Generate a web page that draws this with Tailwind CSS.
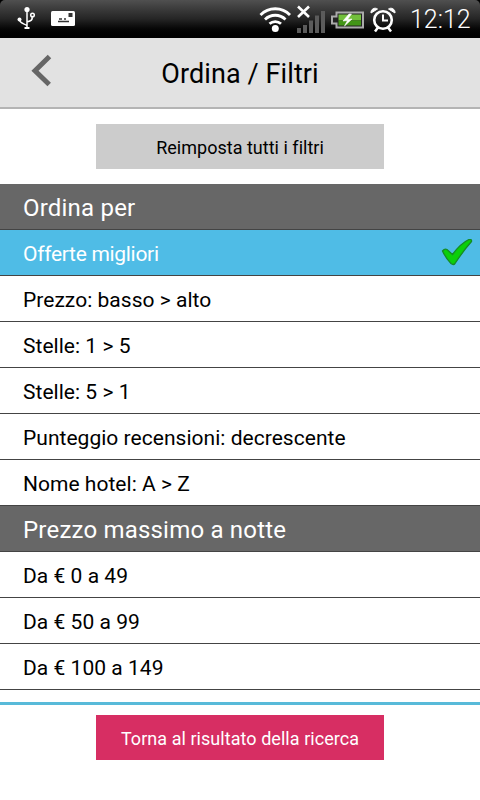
<!DOCTYPE html>
<html lang="it">
<head>
<meta charset="utf-8">
<title>Ordina / Filtri</title>
<script src="https://cdn.jsdelivr.net/npm/@tailwindcss/browser@4"></script>
</head>
<body class="bg-white">
<div class="flex h-[800px] w-[480px] flex-col overflow-hidden bg-white font-[Roboto,sans-serif] text-black">
  <div class="h-[38px] shrink-0 bg-black">
    <div class="flex h-[38px] items-center rounded-t-[5px] bg-linear-to-b from-[#505050] via-[#252525] to-black text-white">
      <svg class="h-[38px] w-[90px]" viewBox="0 0 90 38" fill="none" stroke="#fff" stroke-width="1.5">
        <path d="M27 9V28M19.500 19.500c0 3.500 3 3.500 7.500 6M32 16c1 4-1 5-5 6"/>
        <circle cx="27" cy="9.500" r="2.600" fill="#fff" stroke="none"/>
        <circle cx="19.500" cy="19.500" r="2" fill="#fff" stroke="none"/>
        <circle cx="32.500" cy="15" r="1.800"/>
        <path d="M24.500 28h5" stroke-width="2"/>
        <rect x="51" y="11" width="24" height="15" rx="1.500" fill="#fff" stroke="none"/>
        <path d="M68.500 13h4v4h-4z" fill="#333" stroke="none"/>
        <path d="M58 21.500h11M59 19h3M64 19h2" stroke="#333" stroke-width="1.300"/>
      </svg>
      <svg class="ml-auto h-[38px] w-[150px]" viewBox="250 0 150 38" fill="none">
        <g stroke="#fff" stroke-width="2.800">
          <path d="M260.500 15a20.500 20.500 0 0 1 29.500 0"/>
          <path d="M265 19.500a14.500 14.500 0 0 1 20.500 0"/>
          <path d="M269.500 23.800a8.500 8.500 0 0 1 11.500 0"/>
        </g>
        <circle cx="275.300" cy="28.500" r="3.500" fill="#fff"/>
        <path d="M297 28h4v5h-4zM303 25h4v8h-4zM309 20.500h4V33h-4zM315 15.500h4V33h-4zM321 11h4v22h-4z" fill="#5b5b5b"/>
        <path d="M298 6.500l11 10.500M309 6.500L298 17" stroke="#fff" stroke-width="2.600"/>
        <path d="M336.500 12.500H363v15h-26.500v-4H332v-7h4.500z" fill="#242424" stroke="#aaa" stroke-width="2"/>
        <path d="M338.500 14.500H361v6h-22.500z" fill="#72bf3b"/>
        <path d="M338.500 20.500H361v5h-22.500z" fill="#429517"/>
        <path d="M349 14l-6 7 4.500-.500-3 5.500 7.500-7-4.500.500 4-5.500z" fill="#fff" stroke="#fff" stroke-width=".6"/>
        <g stroke="#fff">
          <circle cx="383" cy="20" r="8.800" stroke-width="2.600"/>
          <path d="M383 14.500V20.500h5" stroke-width="2"/>
          <path d="M378 27.500l-3 4M388 27.500l3 4" stroke-width="2.500"/>
        </g>
        <path d="M371 13c-.500-4 4-6 6.500-4zM395 13c.500-4-4-6-6.500-4z" fill="#fff" stroke="#fff"/>
      </svg>
      <span class="w-[80px] pt-[2px] pl-[10px] text-[25px] leading-[38px] font-light whitespace-nowrap">12:12</span>
    </div>
  </div>

  <header class="grid h-[71px] shrink-0 grid-cols-[90px_1fr_90px] items-center border-b-2 border-[#b4b4b4] bg-[#e2e2e2]">
    <svg class="h-[69px] w-[90px]" viewBox="0 38 90 69" fill="none" stroke="#666" stroke-width="5"><path d="M49.500 56.500L35 70.700l14.200 13.800"/></svg>
    <h1 class="pt-[2px] text-center text-[27px] leading-[36px] tracking-[0.100px] whitespace-nowrap">Ordina / Filtri</h1>
  </header>

  <div class="flex h-[75px] shrink-0 justify-center pt-[15px]">
    <button class="h-[45px] w-[288px] bg-[#ccc] pt-[2px] text-[18px] tracking-[0.020px]">Reimposta tutti i filtri</button>
  </div>

  <main class="shrink-0 text-[21px] tracking-[0.030px] [&>*]:flex [&>*]:h-[46px] [&>*]:items-center [&>*]:border-b [&>*]:border-[#444] [&>*]:pl-[23px] [&>*]:whitespace-nowrap [&>div]:pt-[4px] [&>h2]:pt-[2px]">
    <h2 class="bg-[#676767] text-[24px] tracking-[0.200px] text-white">Ordina per</h2>
    <div class="justify-between bg-[#4fbce6] tracking-[-0.300px] text-white">
      <span>Offerte migliori</span>
      <svg class="mr-[6px] h-[32px] w-[34px]" viewBox="440 238.500 34 32"><path d="M442.500 250.500q2-2.500 4.500-1.500l5.500 5q8-11 16.500-15 3-.500 2.500 2-8 9-16.500 22-1.500 2-4 0-5-5-8.500-12.500z" fill="#0bcf0b" stroke="#168b25" stroke-width="1.300"/></svg>
    </div>
    <div>Prezzo: basso &gt; alto</div>
    <div>Stelle: 1 &gt; 5</div>
    <div>Stelle: 5 &gt; 1</div>
    <div>Punteggio recensioni: decrescente</div>
    <div>Nome hotel: A &gt; Z</div>
    <h2 class="bg-[#676767] text-[24px] tracking-[0.200px] text-white">Prezzo massimo a notte</h2>
    <div>Da € 0 a 49</div>
    <div>Da € 50 a 99</div>
    <div>Da € 100 a 149</div>
  </main>

  <footer class="mt-[12px] flex justify-center border-t-3 border-[#58bad9] pt-[10px]">
    <button class="h-[45px] w-[288px] bg-[#d72e63] pt-[2px] text-[18px] tracking-[0.050px] text-white">Torna al risultato della ricerca</button>
  </footer>
</div>
</body>
</html>
